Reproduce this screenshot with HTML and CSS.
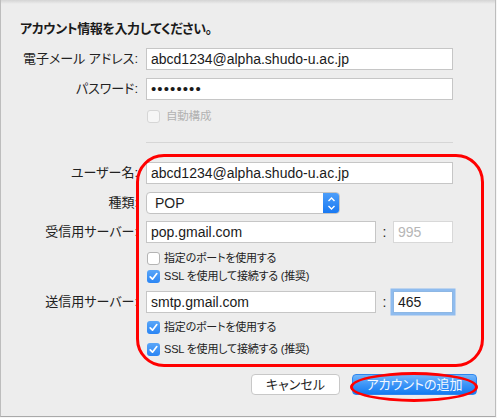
FILE: index.html
```html
<!DOCTYPE html>
<html lang="ja">
<head>
<meta charset="utf-8">
<link rel="stylesheet" href="styles.css">
</head>
<body>
<div class="window">
  <div class="content">
    <h1 class="title">アカウント情報を入力してください。</h1>

    <div class="row r-email">
      <div class="lbl">電子メール アドレス:</div>
      <div class="input">abcd1234@alpha.shudo-u.ac.jp</div>
    </div>
    <div class="row r-pass">
      <div class="lbl">パスワード:</div>
      <div class="input dots">••••••••</div>
    </div>
    <div class="row r-auto">
      <div></div>
      <div class="check disabled"><span class="box"></span><span class="ctext">自動構成</span></div>
    </div>
    <div class="row r-sep">
      <div></div>
      <div class="sep"></div>
    </div>

    <div class="row r-user">
      <div class="lbl">ユーザー名:</div>
      <div class="input">abcd1234@alpha.shudo-u.ac.jp</div>
    </div>
    <div class="row r-kind">
      <div class="lbl">種類:</div>
      <div class="popup">
        <span class="ptext">POP</span>
        <span class="parrow">
          <svg width="17" height="21" viewBox="0 0 17 21"><path d="M5.5 8 L8.5 5 L11.5 8" fill="none" stroke="#fff" stroke-width="1.4"/><path d="M5.5 13 L8.5 16 L11.5 13" fill="none" stroke="#fff" stroke-width="1.4"/></svg>
        </span>
      </div>
    </div>
    <div class="row r-in">
      <div class="lbl">受信用サーバー:</div>
      <div class="server">
        <div class="input srv">pop.gmail.com</div>
        <span class="colon">:</span>
        <div class="input port off">995</div>
      </div>
    </div>
    <div class="row r-c1">
      <div></div>
      <div class="check"><span class="box"></span><span class="ctext">指定のポートを使用する</span></div>
    </div>
    <div class="row r-c2">
      <div></div>
      <div class="check on"><span class="box"><svg width="13" height="13" viewBox="0 0 13 13"><path d="M3.2 6.8 L5.5 9.2 L9.8 3.6" fill="none" stroke="#fff" stroke-width="1.7" stroke-linecap="round" stroke-linejoin="round"/></svg></span><span class="ctext">SSL を使用して接続する (推奨)</span></div>
    </div>
    <div class="row r-out">
      <div class="lbl">送信用サーバー:</div>
      <div class="server">
        <div class="input srv">smtp.gmail.com</div>
        <span class="colon">:</span>
        <div class="input port focus">465</div>
      </div>
    </div>
    <div class="row r-c3">
      <div></div>
      <div class="check on"><span class="box"><svg width="13" height="13" viewBox="0 0 13 13"><path d="M3.2 6.8 L5.5 9.2 L9.8 3.6" fill="none" stroke="#fff" stroke-width="1.7" stroke-linecap="round" stroke-linejoin="round"/></svg></span><span class="ctext">指定のポートを使用する</span></div>
    </div>
    <div class="row r-c4">
      <div></div>
      <div class="check on"><span class="box"><svg width="13" height="13" viewBox="0 0 13 13"><path d="M3.2 6.8 L5.5 9.2 L9.8 3.6" fill="none" stroke="#fff" stroke-width="1.7" stroke-linecap="round" stroke-linejoin="round"/></svg></span><span class="ctext">SSL を使用して接続する (推奨)</span></div>
    </div>

    <div class="buttons">
      <div class="btn cancel">キャンセル</div>
      <div class="btn primary">アカウントの追加</div>
    </div>
  </div>
  <div class="mark-rect"></div>
  <div class="mark-ellipse"></div>
</div>
</body>
</html>
```

FILE: styles.css
```css
* { box-sizing: border-box; }

body {
  margin: 0;
  background: #f6f6f6;
  font-family: "Liberation Sans", "Noto Sans CJK JP", sans-serif;
  color: #1f1f1f;
}

.window {
  position: relative;
  width: 496px;
  height: 417px;
  background: linear-gradient(#d4d4d4, #ededed 4px) #ededed;
  border-left: 1px solid #bdbdbd;
  border-right: 1px solid #bdbdbd;
  border-bottom: 1px solid #a9a9a9;
}

.content {
  padding-top: 21px;
}

.title {
  margin: 0 0 0 19px;
  font-size: 13px;
  font-weight: bold;
  line-height: 16px;
  letter-spacing: -0.4px;
  font-feature-settings: "palt";
  color: #1a1a1a;
}

.row {
  display: grid;
  grid-template-columns: 137px 307px;
  column-gap: 8px;
  align-items: center;
}

.lbl {
  text-align: right;
  font-size: 13px;
  line-height: 16px;
  font-feature-settings: "palt";
  white-space: nowrap;
  color: #222;
}

.input {
  height: 22px;
  background: #fff;
  border: 1px solid #c6c6c6;
  font-size: 14px;
  line-height: 20px;
  padding-left: 4px;
  white-space: nowrap;
  color: #1a1a1a;
}

.dots {
  font-size: 15px;
  letter-spacing: 1.1px;
  padding-left: 4px;
}

.r-email { margin-top: 11px; }
.r-pass { margin-top: 8px; }
.r-auto { margin-top: 10px; }
.r-sep { margin-top: 19px; }
.r-user { margin-top: 19px; }
.r-kind { margin-top: 8px; }
.r-in { margin-top: 7px; }
.r-c1 { margin-top: 9px; }
.r-c2 { margin-top: 5px; }
.r-out { margin-top: 8px; }
.r-c3 { margin-top: 8px; }
.r-c4 { margin-top: 9px; }

.sep {
  height: 1px;
  background: #d6d6d6;
}

/* checkboxes */
.check {
  display: flex;
  align-items: center;
  height: 13px;
  padding-left: 1px;
}

.box {
  width: 13px;
  height: 13px;
  flex: none;
  border: 1px solid #b4b4b4;
  border-radius: 3px;
  background: #fff;
  position: relative;
}

.box svg {
  position: absolute;
  left: -1px;
  top: -1px;
}

.check.on .box {
  border: none;
  background: linear-gradient(#5aa6f8, #2a85f4);
}

.check.on .box svg {
  left: 0;
  top: 0;
}

.check.disabled .box {
  border-color: #d6d6d6;
  background: #f6f6f6;
}

.ctext {
  margin-left: 4px;
  font-size: 11px;
  line-height: 13px;
  letter-spacing: -0.2px;
  font-feature-settings: "palt";
  white-space: nowrap;
  color: #222;
}

.check.disabled .ctext {
  margin-left: 6px;
  font-size: 11.5px;
  color: #b2b2b2;
}

/* popup */
.popup {
  width: 194px;
  height: 22px;
  display: flex;
  background: #fff;
  border: 1px solid #c3c3c3;
  border-radius: 4px;
  overflow: hidden;
}

.ptext {
  flex: 1;
  padding-left: 8px;
  font-size: 14px;
  line-height: 20px;
}

.parrow {
  width: 17px;
  flex: none;
  margin: -1px -1px -1px 0;
  height: 22px;
  background: linear-gradient(#4fa0fa, #1677f2);
  border-radius: 0 4px 4px 0;
  display: flex;
  align-items: center;
  justify-content: center;
}

/* server rows */
.server {
  display: flex;
  align-items: center;
}

.srv {
  width: 230px;
}

.colon {
  width: 17px;
  text-align: center;
  font-size: 14px;
  line-height: 20px;
}

.port {
  width: 60px;
}

.port.off {
  border-color: #d8d8d8;
  color: #b6b6b6;
}

.port.focus {
  border-color: #8db7e4;
  box-shadow: 0 0 0 2.5px #8fbcef;
}

/* buttons */
.buttons {
  display: flex;
  justify-content: flex-end;
  gap: 12px;
  margin-top: 18px;
  padding-right: 18px;
}

.btn {
  height: 21px;
  border-radius: 4px;
  font-size: 13px;
  line-height: 20px;
  text-align: center;
  font-feature-settings: "palt";
}

.cancel {
  width: 89px;
  background: #fff;
  border: 1px solid #c8c8c8;
  color: #1e1e1e;
}

.primary {
  width: 125px;
  background: linear-gradient(#72b6fb, #3d95f7 50%, #137bf1);
  border: 1px solid #2f86ee;
  color: #f3f8ff;
}

/* red annotation marks */
.mark-rect {
  position: absolute;
  left: 135px;
  top: 154px;
  width: 348px;
  height: 213px;
  border: 3.5px solid #f00;
  border-radius: 28px;
}

.mark-ellipse {
  position: absolute;
  left: 349px;
  top: 372px;
  width: 128px;
  height: 30px;
  border: 3px solid #f00;
  border-radius: 50%;
}
```
